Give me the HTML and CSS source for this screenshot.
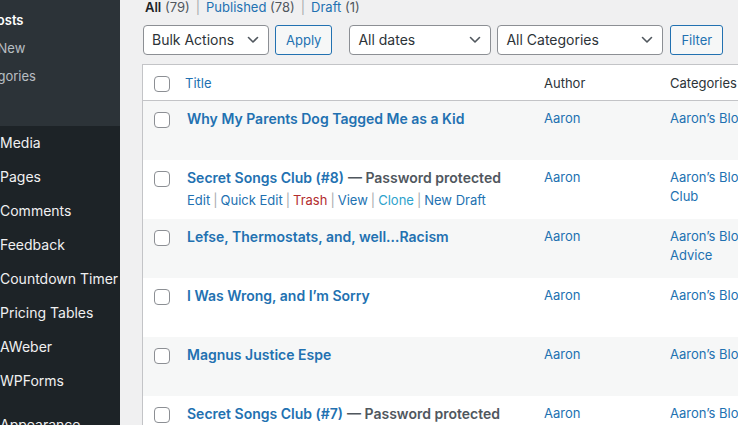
FILE: index.html
```html
<!DOCTYPE html>
<html lang="en">
<head>
<meta charset="utf-8">
<title>Posts</title>
<link rel="stylesheet" href="styles.css">
</head>
<body>
<div class="layout">
  <nav class="sidebar">
    <div class="menu-shift">
      <ul class="submenu">
        <li class="current">All Posts</li>
        <li>Add New</li>
        <li>Categories</li>
      </ul>
      <ul class="menu">
        <li>Media</li>
        <li>Pages</li>
        <li>Comments</li>
        <li>Feedback</li>
        <li>Countdown Timer</li>
        <li>Pricing Tables</li>
        <li>AWeber</li>
        <li>WPForms</li>
        <li class="gap">Appearance</li>
      </ul>
    </div>
  </nav>
  <main class="content">
    <ul class="subsubsub">
      <li><b class="cur">All</b> <span class="count">(79)</span></li>
      <li class="sep">|</li>
      <li><a>Published</a> <span class="count">(78)</span></li>
      <li class="sep">|</li>
      <li><a>Draft</a> <span class="count">(1)</span></li>
    </ul>
    <div class="toolbar">
      <div class="select w-bulk">Bulk Actions<svg class="chev" viewBox="0 0 12 8"><path d="M1.5 1.5 6 6l4.5-4.5"/></svg></div>
      <div class="btn">Apply</div>
      <div class="select w-dates spaced">All dates<svg class="chev" viewBox="0 0 12 8"><path d="M1.5 1.5 6 6l4.5-4.5"/></svg></div>
      <div class="select w-cats">All Categories<svg class="chev" viewBox="0 0 12 8"><path d="M1.5 1.5 6 6l4.5-4.5"/></svg></div>
      <div class="btn">Filter</div>
    </div>
    <table class="posts">
      <thead>
        <tr>
          <th class="check"><span class="cb"></span></th>
          <th class="col-title"><a>Title</a></th>
          <th class="col-author">Author</th>
          <th class="col-cats">Categories</th>
          <th class="col-rest"></th>
        </tr>
      </thead>
      <tbody>
        <tr class="alt">
          <td class="check"><span class="cb"></span></td>
          <td class="col-title"><a class="row-title">Why My Parents Dog Tagged Me as a Kid</a><div class="row-actions hidden">&nbsp;</div></td>
          <td class="col-author"><a>Aaron</a></td>
          <td class="col-cats"><a>Aaron’s Blog</a></td>
          <td class="col-rest"></td>
        </tr>
        <tr>
          <td class="check"><span class="cb"></span></td>
          <td class="col-title"><a class="row-title">Secret Songs Club (#8)</a> <span class="state">— Password protected</span>
            <div class="row-actions"><a>Edit</a><i>|</i><a>Quick Edit</a><i>|</i><a class="trash">Trash</a><i>|</i><a>View</a><i>|</i><a class="clone">Clone</a><i>|</i><a>New Draft</a></div></td>
          <td class="col-author"><a>Aaron</a></td>
          <td class="col-cats"><a>Aaron’s Blog</a>, <a>Club</a></td>
          <td class="col-rest"></td>
        </tr>
        <tr class="alt">
          <td class="check"><span class="cb"></span></td>
          <td class="col-title"><a class="row-title">Lefse, Thermostats, and, well…Racism</a><div class="row-actions hidden">&nbsp;</div></td>
          <td class="col-author"><a>Aaron</a></td>
          <td class="col-cats"><a>Aaron’s Blog</a>, <a>Advice</a></td>
          <td class="col-rest"></td>
        </tr>
        <tr>
          <td class="check"><span class="cb"></span></td>
          <td class="col-title"><a class="row-title">I Was Wrong, and I’m Sorry</a><div class="row-actions hidden">&nbsp;</div></td>
          <td class="col-author"><a>Aaron</a></td>
          <td class="col-cats"><a>Aaron’s Blog</a></td>
          <td class="col-rest"></td>
        </tr>
        <tr class="alt">
          <td class="check"><span class="cb"></span></td>
          <td class="col-title"><a class="row-title">Magnus Justice Espe</a><div class="row-actions hidden">&nbsp;</div></td>
          <td class="col-author"><a>Aaron</a></td>
          <td class="col-cats"><a>Aaron’s Blog</a></td>
          <td class="col-rest"></td>
        </tr>
        <tr>
          <td class="check"><span class="cb"></span></td>
          <td class="col-title"><a class="row-title">Secret Songs Club (#7)</a> <span class="state">— Password protected</span><div class="row-actions hidden">&nbsp;</div></td>
          <td class="col-author"><a>Aaron</a></td>
          <td class="col-cats"><a>Aaron’s Blog</a></td>
          <td class="col-rest"></td>
        </tr>
      </tbody>
    </table>
  </main>
</div>
</body>
</html>
```

FILE: styles.css
```css
* { box-sizing: border-box; }
html, body { margin: 0; padding: 0; height: 100%; overflow: hidden; }
body {
  font-family: Inter, "Noto Sans", sans-serif;
  font-size: 13px;
  color: #3c434a;
  background: #f0f0f1;
}
a { color: #2271b1; text-decoration: none; }
ul { list-style: none; margin: 0; padding: 0; }

.layout { display: flex; height: 425px; }

.sidebar {
  width: 120px;
  flex: none;
  background: #1d2327;
  overflow: hidden;
}
.menu-shift { margin-left: -36px; width: 160px; }
.submenu {
  background: #2c3338;
  height: 126px;
  padding-top: 6px;
}
.submenu li {
  padding-left: 5px;
  height: 28px;
  line-height: 28px;
  font-size: 13px;
  color: rgba(240, 246, 252, 0.72);
  white-space: nowrap;
}
.submenu li.current { color: #fff; font-weight: 600; }
.menu li {
  padding-left: 36px;
  height: 34px;
  line-height: 34px;
  font-size: 14px;
  color: #f0f0f1;
  white-space: nowrap;
}
.menu li.gap { margin-top: 10px; }

.content {
  flex: 1;
  min-width: 0;
  padding-left: 22px;
  overflow: hidden;
}

.subsubsub {
  display: flex;
  gap: 6px;
  padding-left: 3px;
  height: 14px;
  line-height: 14px;
  font-size: 13px;
  white-space: nowrap;
}
.subsubsub .cur { color: #1d2327; font-weight: 600; }
.subsubsub .count { color: #50575e; }
.subsubsub .sep { color: #a7aaad; }

.toolbar {
  display: flex;
  gap: 6px;
  margin-top: 11px;
  padding-left: 1px;
  height: 30px;
}
.select {
  height: 30px;
  border: 1px solid #8c8f94;
  border-radius: 4px;
  background: #fff;
  color: #2c3338;
  font-size: 14px;
  line-height: 28px;
  padding-left: 8px;
  display: flex;
  justify-content: space-between;
  align-items: center;
  padding-right: 9px;
  white-space: nowrap;
}
.chev { width: 12px; height: 8px; fill: none; stroke: #50575e; stroke-width: 1.6; stroke-linecap: round; stroke-linejoin: round; }
.w-bulk { width: 126px; }
.w-dates { width: 142px; }
.w-cats { width: 166px; }
.spaced { margin-left: 11px; }
.btn {
  height: 30px;
  border: 1px solid #2271b1;
  border-radius: 3px;
  background: #f6f7f7;
  color: #2271b1;
  font-size: 13px;
  line-height: 28px;
  padding: 0 10px;
  white-space: nowrap;
}
.toolbar .btn:last-child { margin-left: 1px; }

.posts {
  margin-top: 9px;
  width: 900px;
  border: 1px solid #c3c4c7;
  border-collapse: separate;
  border-spacing: 0;
  background: #fff;
  table-layout: fixed;
}
.posts th, .posts td { text-align: left; vertical-align: top; padding: 8px 10px; }
.posts thead th {
  font-weight: 400;
  font-size: 13px;
  line-height: 19px;
  padding-top: 9px;
  padding-bottom: 7px;
  color: #2c3338;
  border-bottom: 1px solid #c3c4c7;
}
.posts .check { width: 34px; padding: 11px 0 0 11px; }
.posts thead th.check { padding: 11px 0 0 11px; }
.posts .col-title { width: 357px; }
.posts .col-author { width: 126px; line-height: 19px; }
.posts .col-cats { width: 112px; line-height: 19px; }
.posts thead .col-title a { margin-left: -2px; }
.cb {
  display: block;
  width: 16px;
  height: 16px;
  border: 1px solid #8c8f94;
  border-radius: 4px;
  background: #fff;
}
tbody tr.alt td { background: #f6f7f7; }
.row-title { font-weight: 600; font-size: 14px; line-height: 20px; }
.col-title { font-size: 14px; line-height: 20px; white-space: nowrap; }
.state { font-weight: 600; color: #50575e; }
.row-actions {
  padding-top: 2px;
  font-size: 13px;
  line-height: 21px;
  color: #a7aaad;
}
.row-actions.hidden { visibility: hidden; }
.row-actions i { font-style: normal; margin: 0 3px; }
.row-actions .trash { color: #b32d2e; }
.row-actions .clone { color: #2ea2cc; }
```
